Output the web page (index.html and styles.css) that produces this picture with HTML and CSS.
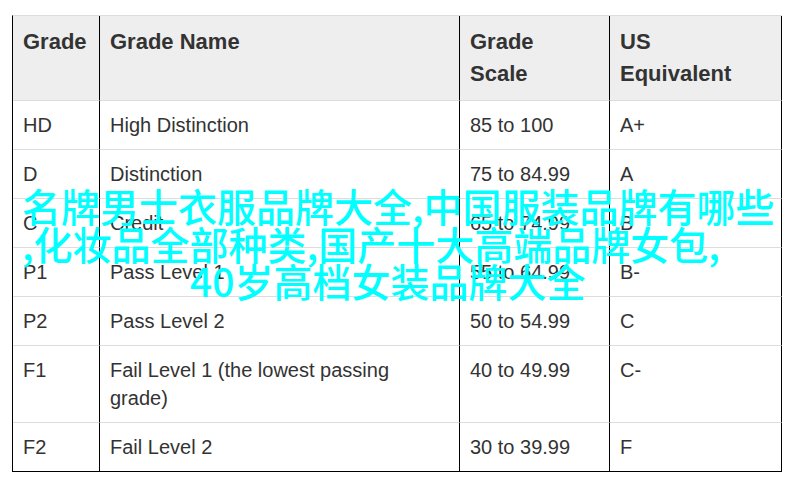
FILE: index.html
```html
<!DOCTYPE html>
<html lang="zh">
<head>
<meta charset="utf-8">
<title>Grades</title>
<link rel="stylesheet" href="styles.css">
</head>
<body>
<div class="wrap">
  <table class="grades">
    <thead>
      <tr>
        <th class="c1">Grade</th>
        <th class="c2">Grade Name</th>
        <th class="c3">Grade Scale</th>
        <th class="c4">US Equivalent</th>
      </tr>
    </thead>
    <tbody>
      <tr><td>HD</td><td>High Distinction</td><td>85 to 100</td><td>A+</td></tr>
      <tr><td>D</td><td>Distinction</td><td>75 to 84.99</td><td>A</td></tr>
      <tr><td>C</td><td>Credit</td><td>65 to 74.99</td><td>B</td></tr>
      <tr><td>P1</td><td>Pass Level 1</td><td>55 to 64.99</td><td>B-</td></tr>
      <tr><td>P2</td><td>Pass Level 2</td><td>50 to 54.99</td><td>C</td></tr>
      <tr><td>F1</td><td>Fail Level 1 (the lowest passing grade)</td><td>40 to 49.99</td><td>C-</td></tr>
      <tr><td>F2</td><td>Fail Level 2</td><td>30 to 39.99</td><td>F</td></tr>
    </tbody>
  </table>
  <div class="overlay">
    <span class="line">名牌男士衣服品牌大全,中国服装品牌有哪些</span>
    <span class="line">,化妆品全部种类,国产十大高端品牌女包,</span>
    <span class="line line-3">40岁高档女装品牌大全</span>
  </div>
</div>
</body>
</html>
```

FILE: styles.css
```css
html, body {
  margin: 0;
  padding: 0;
  background: #fff;
}

.wrap {
  position: relative;
  width: 798px;
  height: 485px;
  padding: 15px 0 0 12px;
  box-sizing: border-box;
}

.grades {
  table-layout: fixed;
  border-collapse: separate;
  border-spacing: 0;
  width: 770px;
  border-left: 1px solid #000;
  border-top: 1px solid #ddd;
  font-family: "Liberation Sans", Arial, sans-serif;
  color: #333;
}

.grades th,
.grades td {
  box-sizing: border-box;
  text-align: left;
  vertical-align: top;
  padding: 10px 16px 10px 10px;
  border-right: 1px solid #000;
  border-bottom: 1px solid #ddd;
}

.grades th {
  background: #eee;
  font-size: 22px;
  font-weight: bold;
  line-height: 32px;
}

.grades td {
  font-size: 20px;
  line-height: 28px;
}

.grades tbody tr:last-child td {
  border-bottom: 1px solid #000;
}

.c1 { width: 87px; }
.c2 { width: 360px; }
.c3 { width: 150px; }
.c4 { width: 172px; }

.overlay {
  position: absolute;
  left: 22px;
  top: 187px;
  display: flex;
  flex-direction: column;
  align-items: flex-start;
  font-family: "Noto Sans CJK SC", "Noto Sans", sans-serif;
  font-size: 39px;
  font-weight: 500;
  line-height: 37.5px;
  color: #00ffff;
  white-space: nowrap;
}

.line-3 {
  margin-left: 168px;
}
```
